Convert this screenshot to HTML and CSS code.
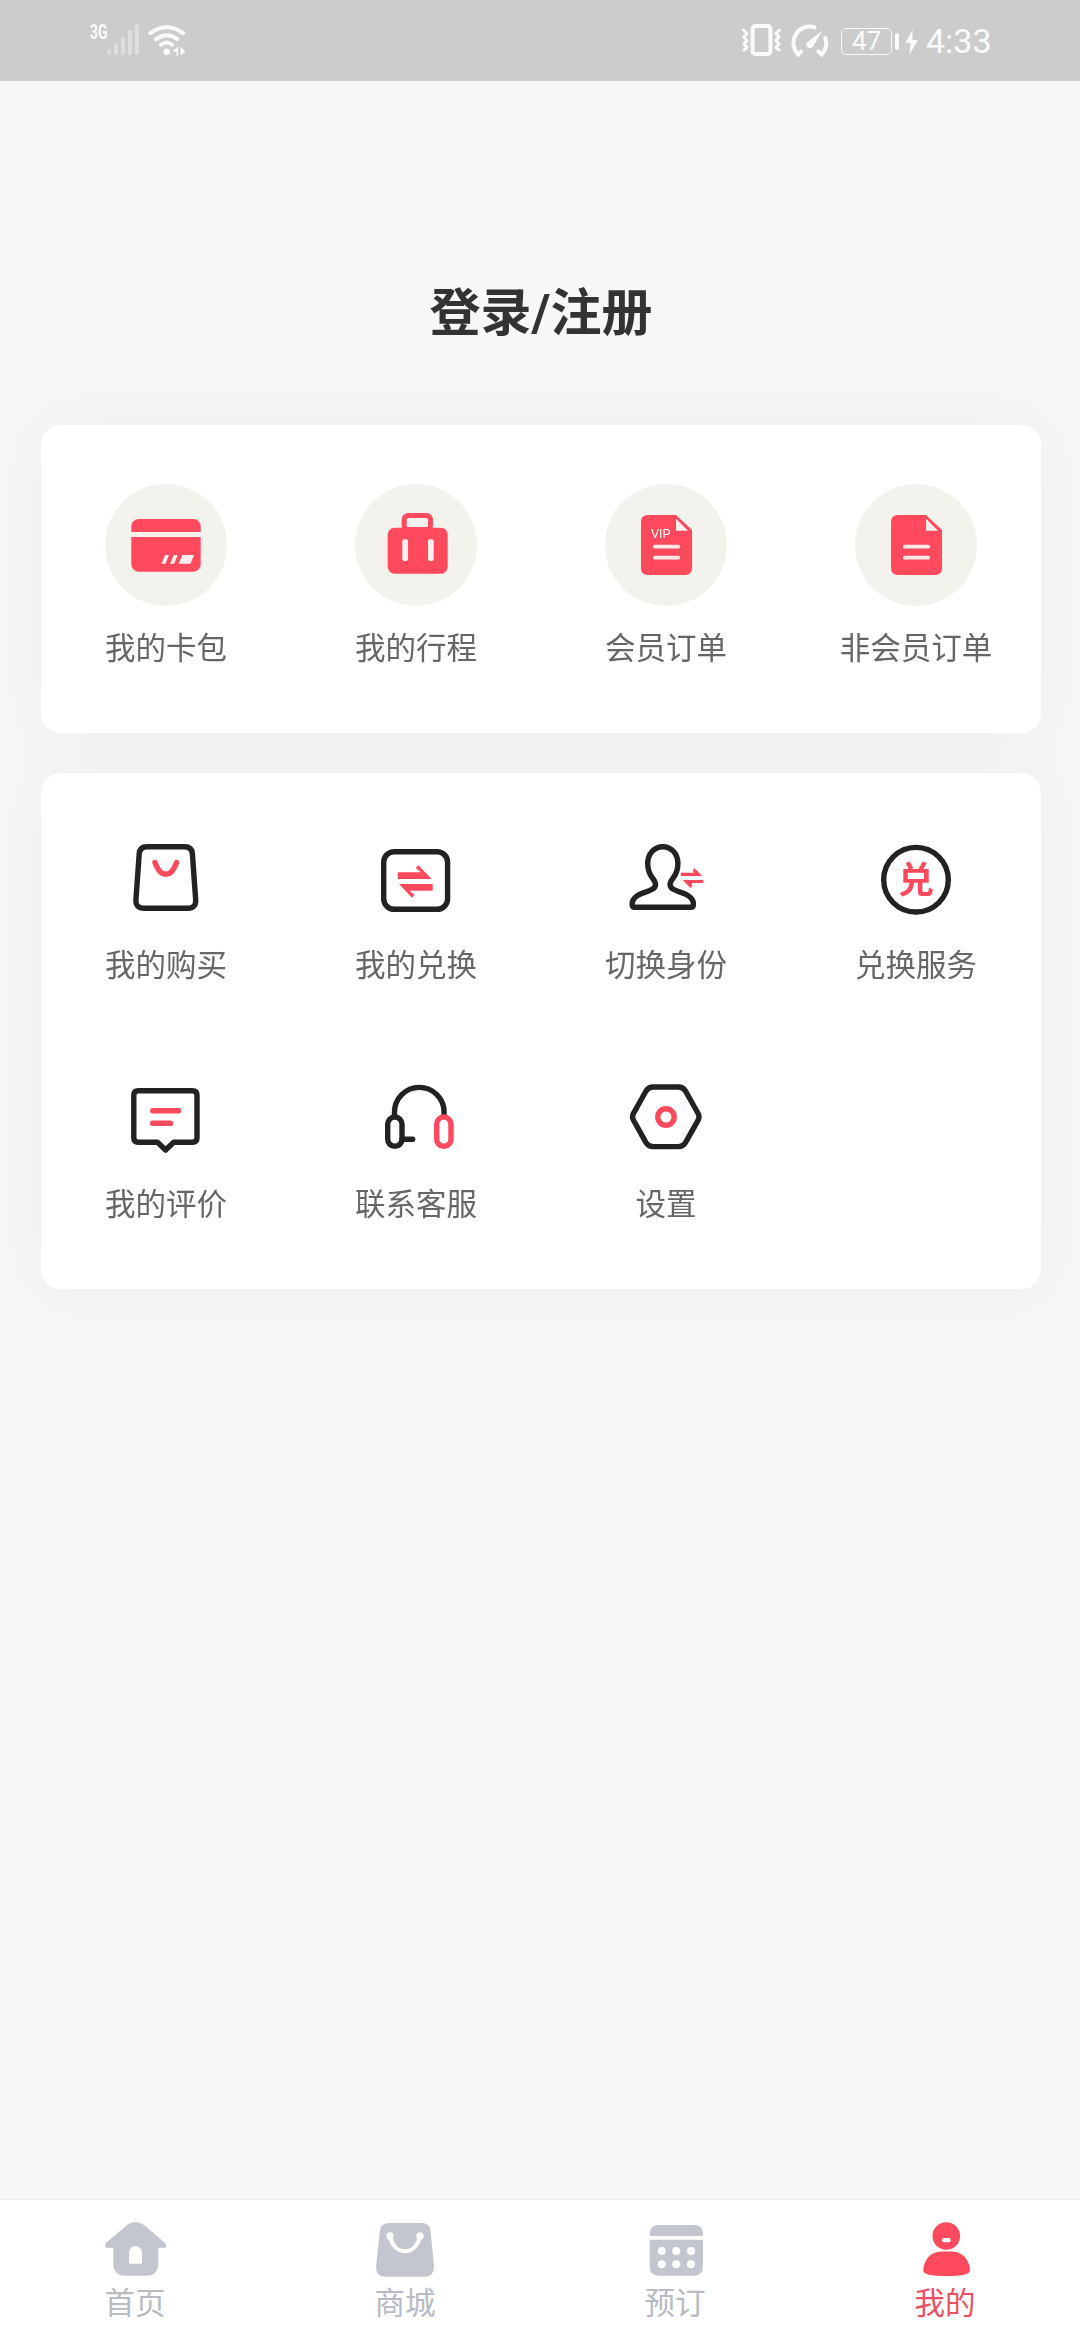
FILE: index.html
```html
<!DOCTYPE html>
<html lang="zh-CN">
<head>
<meta charset="utf-8">
<title>我的</title>
<link rel="stylesheet" href="styles.css">
</head>
<body>
<div class="screen">
  <header class="status">
    <div class="status-left">
      <span class="net">3G</span>
      <svg class="signal" width="34" height="36" viewBox="106 22 34 36"><path d="M109 51v2M116 45v8M123 39v14M130 32v21M137 26.500v26.500"/></svg>
      <svg class="wifi" width="42" height="36" viewBox="147 22 42 36">
        <g class="line"><path d="M150.500 33Q166.700 21.500 183 33M156 39.200Q166.700 31.300 177.300 39.200M161 44.800Q166.700 40.300 172 44.800"/></g>
        <circle cx="166.700" cy="51.700" r="3.300"/><path d="M172.500 51.500l5.500-5v9h-1.500v-4zM180.500 46.500l5 5-5 4z"/>
      </svg>
    </div>
    <div class="status-right">
      <svg width="42" height="36" viewBox="741 22 42 36"><g class="line">
        <rect x="752.600" y="26.100" width="17.800" height="27.800" rx="2.500"/>
        <path class="zig" d="M743.500 30l3.500 3.500-3 3.500 3 3.500-3 3.500 3 3.500-3 2.500M779.500 30l-3.500 3.500 3 3.500-3 3.500 3 3.500-3 3.500 3 2.500"/></g>
      </svg>
      <svg class="gauge" width="40" height="36" viewBox="790 22 40 36"><g class="line">
        <path d="M814.500 27.300A16.300 16.300 0 0 0 798.300 54.500L801 51.500M825.300 38A16.300 16.300 0 0 1 821.500 54.500L818.500 51.500"/></g>
        <path d="M822.500 30.500L813 46.500A3.600 3.600 0 1 1 807 42.500z"/>
      </svg>
      <span class="battery">47</span><span class="battery-cap"></span>
      <svg class="bolt" width="13" height="26" viewBox="905 29 13 26"><path d="M912.500 29.500L905.500 43h5l-1 11.500L918 40h-5.500z"/></svg>
      <span class="clock">4:33</span>
    </div>
  </header>

  <main class="main">
    <h1 class="login">登录/注册</h1>
    <div class="cards">
      <section class="card orders">
        <a class="item"><svg class="round" viewBox="0 0 122 122">
          <rect class="red" x="26.300" y="35" width="69.400" height="52.700" rx="7.500"/><path class="cut" d="M26 48h70v5H26zM60 71h4l-3.500 8.700h-4zM68.700 71h4l-3.500 8.700h-4zM77.300 71H89l-3.500 8.700H73.700z"/></svg><span>我的卡包</span></a>
        <a class="item"><svg class="round" viewBox="0 0 122 122">
          <rect class="red" x="32.700" y="43.700" width="60" height="46" rx="7"/><rect class="handle" x="49.200" y="31.500" width="26.300" height="14" rx="4"/><rect class="cut" x="47.300" y="55.300" width="5.700" height="21.700" rx="2"/><rect class="cut" x="73" y="55.300" width="5.700" height="21.700" rx="2"/></svg><span>我的行程</span></a>
        <a class="item"><svg class="round" viewBox="0 0 122 122">
          <path class="red" d="M43 31H71L87 46V84Q87 91 80 91H43Q36 91 36 84V38Q36 31 43 31z"/><path class="cut" d="M71 34.700v12h12z"/><path class="rule" d="M49.800 62.700h23.400M49.800 73.700h23.400"/><text class="vip" x="46" y="54.300" textLength="19.500" lengthAdjust="spacingAndGlyphs">VIP</text></svg><span>会员订单</span></a>
        <a class="item"><svg class="round" viewBox="0 0 122 122">
          <path class="red" d="M43 31H71L87 46V84Q87 91 80 91H43Q36 91 36 84V38Q36 31 43 31z"/><path class="cut" d="M71 34.700v12h12z"/><path class="rule" d="M49.800 62.700h23.400M49.800 73.700h23.400"/></svg><span>非会员订单</span></a>
      </section>

      <section class="card tools">
        <a class="item"><svg class="icon" viewBox="0 0 90 80">
          <path d="M26 6.700H63.500Q71 6.700 71.400 14L74.700 60Q75 68.200 67 68.200H23Q14.500 68.200 14.900 60L18.200 14Q18.600 6.700 26 6.700z"/><path class="accent" d="M34 22.500C37 31 40.500 34.300 44.800 34.300S52.600 31 55.600 22.500"/></svg><span>我的购买</span></a>
        <a class="item"><svg class="icon" viewBox="0 0 90 80">
          <rect x="12.700" y="11.700" width="63.900" height="57.600" rx="10.500"/><path class="solid" d="M26.700 32.300H49.700L44.700 27.700 47.300 25.300 60.700 39H26.700zM61.700 50.700H38.700L43.700 55 41 57.700 28 44H61.700z"/></svg><span>我的兑换</span></a>
        <a class="item"><svg class="icon" viewBox="0 0 90 80">
          <path d="M41.800 6.700C50.500 6.700 56.900 14 56.900 23.500C56.900 30 54.800 34.500 52.300 37.800C48 43 48 47 52.500 49.300C57 52 62 52.300 67 55.500C71.500 58.500 72.800 61 72.400 65Q72.200 67.300 70 67.300H13.600Q11.400 67.300 11.200 65C10.800 61 12.100 58.500 16.600 55.500C21.600 52.300 26.600 52 31.100 49.300C35.600 47 35.600 43 31.300 37.800C28.800 34.500 26.700 30 26.700 23.500C26.700 14 33.100 6.700 41.800 6.700z"/><path class="solid" d="M60 32.700H73L71.700 30 73.500 28.300 81.300 36H60zM82.300 43H70.500L71.300 46 69.500 48 61.700 40H82.300z"/></svg><span>切换身份</span></a>
        <a class="item"><svg class="icon" viewBox="0 0 90 80">
          <circle cx="45" cy="39.700" r="32.300"/><text class="dui" x="45" y="53" text-anchor="middle">兑</text></svg><span>兑换服务</span></a>
        <a class="item"><svg class="icon" viewBox="0 0 90 80">
          <path d="M17.300 11.700H71.500Q76 11.700 76 16.200V58.800Q76 63.300 71.500 63.300H52.700L44.600 71 36.500 63.300H17.300Q12.800 63.300 12.800 58.800V16.200Q12.800 11.700 17.300 11.700z"/><path class="accent" d="M31.700 31.700H57.600M31.700 44.300H49.600"/></svg><span>我的评价</span></a>
        <a class="item"><svg class="icon" viewBox="0 0 90 80">
          <path d="M23.500 37V33.200A24.800 24.800 0 0 1 73.100 33.200V37M31 60.300H41.700"/><rect x="16.700" y="38" width="14.300" height="29.300" rx="7.100"/><rect class="accent" x="65.700" y="38" width="14.300" height="29.300" rx="7.100"/></svg><span>联系客服</span></a>
        <a class="item"><svg class="icon" viewBox="0 0 90 80">
          <path d="M32 8H57.500Q62 8 64.500 12L77 34.300Q79 37.800 77 41.300L64.500 63.600Q62 67.600 57.500 67.600H32Q27.500 67.600 25 63.600L12.500 41.300Q10.500 37.800 12.500 34.300L25 12Q27.500 8 32 8z"/><circle class="accent" cx="45" cy="38" r="8.200"/></svg><span>设置</span></a>
      </section>
    </div>
  </main>

  <nav class="tabs">
    <a class="tab"><svg viewBox="0 0 66 60">
      <path d="M25 5Q33.500-1 42 5L63 23Q65 25.500 63.500 27.700H56.300V43Q56.300 55.700 44 55.700H23.500Q11.300 55.700 11.300 43V27.700H4Q2.300 25.500 4 23z"/><path class="hole" d="M27 42.700V32.500a6.500 6.500 0 0 1 13 0V42.700q0 1-1 1H28q-1 0-1-1z"/></svg><span>首页</span></a>
    <a class="tab"><svg viewBox="0 0 66 60">
      <path d="M17 3H49.700Q57.500 3 58.500 11L62 46Q62 56.700 53 56.700H13Q4 56.700 4 46.500L7.900 11Q8.800 3 17 3z"/><g class="hole"><circle cx="18" cy="16" r="3.700"/><circle cx="48" cy="16" r="3.700"/></g><path class="smile" d="M18 16C20 26 26 31.300 33 31.300S46 26 48 16"/></svg><span>商城</span></a>
    <a class="tab"><svg viewBox="0 0 66 60">
      <path d="M16.700 5H52Q61 5 61 14V16H7.700V14Q7.700 5 16.700 5zM7.700 19.700H61V46.500Q61 55.700 52 55.700H16.700Q7.700 55.700 7.700 46.500z"/><g class="hole"><circle cx="19.700" cy="31" r="4"/><circle cx="34.300" cy="31" r="4"/><circle cx="49" cy="31" r="4"/><circle cx="19.700" cy="44.300" r="4"/><circle cx="34.300" cy="44.300" r="4"/><circle cx="49" cy="44.300" r="4"/></g></svg><span>预订</span></a>
    <a class="tab active"><svg viewBox="0 0 66 60">
      <circle cx="34.300" cy="16" r="13.800"/><path d="M29 31.400H40C50 31.400 58 40 58 50.500Q58 56 34.500 56T11.300 50.500C11.300 40 19 31.400 29 31.400z"/><rect class="hole" x="30" y="18" width="8.700" height="4.300" rx="2"/></svg><span>我的</span></a>
  </nav>
</div>
</body>
</html>
```
FILE: styles.css
```css
* { box-sizing: border-box; }
body { margin: 0; background: #f6f7f9; font-family: "Noto Sans CJK SC", sans-serif; }
svg { display: block; flex: none; }
.screen { width: 1080px; height: 2340px; display: flex; flex-direction: column; overflow: hidden; }

.status { height: 81px; flex: none; background: #ccc; color: #fafafa; display: flex; justify-content: space-between; padding: 22px 89px 0 90px; font-family: Roboto, sans-serif; }
.status svg { fill: #fafafa; }
.status-left, .status-right { display: flex; height: 36px; align-items: flex-start; }
.net { width: 16px; font: 700 20px/20px Roboto, sans-serif; transform: scaleX(.7); transform-origin: left; }
.status .signal { fill: none; stroke: #dedede; stroke-width: 4; stroke-linecap: round; }
.wifi { margin-left: 7px; }
.line { fill: none; stroke: #fafafa; stroke-width: 4; stroke-linecap: round; }
.zig { stroke-width: 3; stroke-linejoin: round; }
.gauge { margin-left: 7px; }
.battery { width: 51px; height: 27px; margin: 6px 0 0 11px; border: 1.500px solid #fafafa; border-radius: 5px; font-size: 26px; line-height: 25px; text-align: center; }
.battery-cap { width: 4px; height: 17px; margin: 11px 0 0 3px; border-radius: 2px; background: #fafafa; }
.bolt { margin: 7px 0 0 6px; }
.clock { margin: 1px 0 0 8px; width: 65px; font-size: 34px; line-height: 36px; white-space: nowrap; }

.main { flex: 1; padding: 197px 39px 0 41px; }
.login { margin: 0; height: 147px; font-size: 51px; line-height: 72px; font-weight: 700; font-family: Roboto, "Noto Sans CJK SC", sans-serif; text-align: center; color: #333; }
.cards { display: flex; flex-direction: column; gap: 40px; filter: drop-shadow(0 0 30px rgba(0, 0, 0, .04)); }
.card { display: grid; grid-template-columns: repeat(4, 250px); background: #fff; border-radius: 20px; }
.item { display: flex; flex-direction: column; align-items: center; font-size: 30.500px; line-height: 44px; color: #666; white-space: nowrap; }
.orders { height: 308px; padding-top: 59px; }
.orders .item { gap: 18px; }
.tools { height: 516px; padding-top: 67px; grid-auto-rows: 239px; align-content: start; }
.tools .item { gap: 21px; }
.round { width: 122px; height: 122px; border-radius: 50%; background: #f3f2ed; }
.red { fill: #ff495d; }
.cut { fill: #f8f0ee; }
.handle { fill: none; stroke: #ff495d; stroke-width: 5; }
.rule { stroke: #ffe9e9; stroke-width: 3.700; stroke-linecap: round; }
.vip { fill: #fff; font: 13px "Liberation Sans", sans-serif; }
.icon { width: 90px; height: 80px; fill: none; stroke: #222; stroke-width: 5.400; stroke-linecap: round; stroke-linejoin: round; }
.icon .accent { stroke: #ff495d; }
.icon .solid { fill: #ff495d; stroke: none; }
.icon .dui { fill: #ff495d; stroke: none; font: 700 36px "Noto Sans CJK SC", sans-serif; }

.tabs { height: 141px; flex: none; display: grid; grid-template-columns: repeat(4, 1fr); background: #fff; border-top: 1px solid #eeeff1; padding-top: 20px; }
.tab { display: flex; flex-direction: column; align-items: center; font-size: 30.500px; line-height: 42px; color: #b8bbc3; }
.tab svg { width: 66px; height: 60px; fill: #c3c6ce; }
.tab .hole { fill: #fff; }
.tab .smile { fill: none; stroke: #fff; stroke-width: 4; }
.tab.active { color: #ea5061; }
.tab.active svg { fill: #ff495d; }
```
